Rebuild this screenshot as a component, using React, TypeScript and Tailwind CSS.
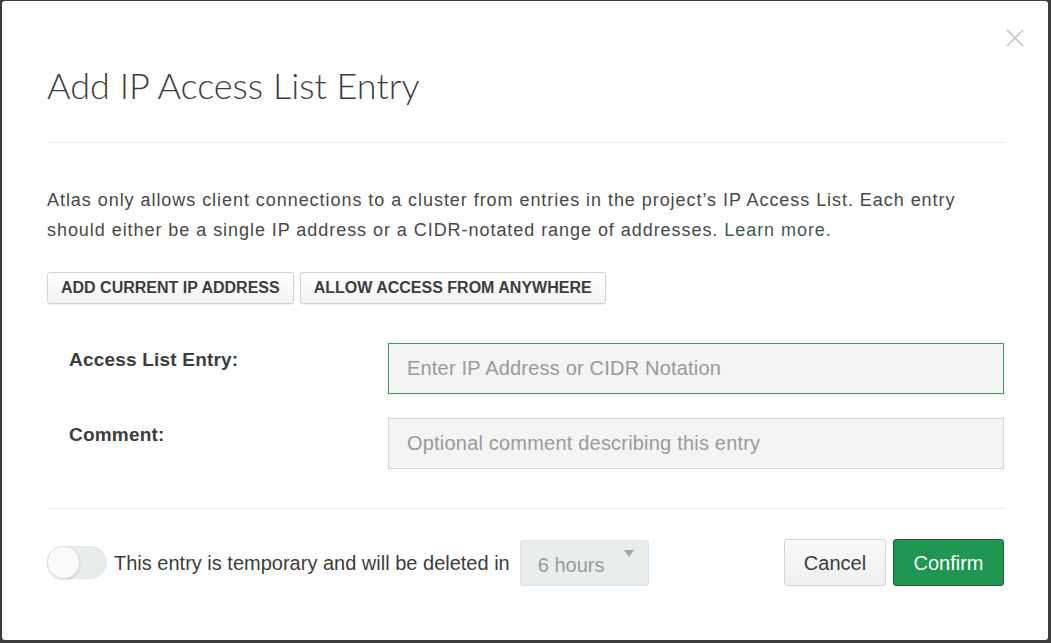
import React, { useState } from 'react';

const body = "font-['Liberation_Sans',Arial,sans-serif]";

export default function App() {
  const [temporary, setTemporary] = useState(false);

  return (
    <div className={`h-[643px] w-[1051px] bg-[#3b3b3b] pt-px pl-[2px] pr-[3px] pb-[3px] ${body}`}>
      <div className="relative h-full w-full rounded-[3px] bg-white pl-[45px] pr-[44px] text-[#494747]">
        {/* Close */}
        <button className="absolute right-[24px] top-[28px] text-[#c5c9c7]" aria-label="Close">
          <svg width="18" height="18" viewBox="0 0 18 18" fill="none" stroke="currentColor" strokeWidth="1.6">
            <path d="M1 1 L17 17 M17 1 L1 17" />
          </svg>
        </button>

        {/* Header */}
        <div className="border-b border-[#e7eeec] pt-[62px] pb-[35px]">
          <h1 className="font-['Lato',sans-serif] text-[36px] font-light leading-[44px] text-[#3d3d3d]">
            Add IP Access List Entry
          </h1>
        </div>

        {/* Description */}
        <p className="mt-[42px] text-[18px] leading-[30px] tracking-[0.95px]">
          Atlas only allows client connections to a cluster from entries in the project’s IP Access List. Each entry
          should either be a single IP address or a CIDR-notated range of addresses. <a className="text-[#3b5c4a]">Learn more.</a>
        </p>

        <div className="mt-[27px] flex gap-[6px]">
          <button className="h-[32px] rounded-[3px] border border-[#cfd3d1] bg-gradient-to-b from-white to-[#f1f2f1] px-[13px] text-[16px] font-bold uppercase text-[#3d3d3d] shadow-[0_1px_1px_rgba(0,0,0,0.06)]">
            Add current IP address
          </button>
          <button className="h-[32px] rounded-[3px] border border-[#cfd3d1] bg-gradient-to-b from-white to-[#f1f2f1] px-[13px] text-[16px] font-bold uppercase text-[#3d3d3d] shadow-[0_1px_1px_rgba(0,0,0,0.06)]">
            Allow access from anywhere
          </button>
        </div>

        {/* Form */}
        <div className="mt-[39px] flex flex-col gap-[24px] border-b border-[#e7eeec] pb-[39px]">
          <div className="flex items-start">
            <label className="w-[341px] pl-[22px] pt-[3px] text-[19px] font-bold tracking-[0.2px] text-[#3d3d3d]">Access List Entry:</label>
            <input
              autoFocus
              placeholder="Enter IP Address or CIDR Notation"
              className="h-[51px] flex-1 border border-[#3d9c5f] bg-[#f3f4f3] px-[18px] text-[20px] tracking-[0.2px] text-[#3d3d3d] shadow-[0_0_6px_rgba(0,0,0,0.08)] outline-none placeholder:text-[#9a9a9a]"
            />
          </div>
          <div className="flex items-start">
            <label className="w-[341px] pl-[22px] pt-[3px] text-[19px] font-bold tracking-[0.2px] text-[#3d3d3d]">Comment:</label>
            <input
              placeholder="Optional comment describing this entry"
              className="h-[51px] flex-1 border border-[#d5d8d6] bg-[#f3f4f3] px-[18px] text-[20px] tracking-[0.2px] text-[#3d3d3d] outline-none placeholder:text-[#9a9a9a]"
            />
          </div>
        </div>

        {/* Footer */}
        <div className="mt-[30px] flex items-center justify-between">
          <div className="flex items-center">
            <button
              onClick={() => setTemporary(!temporary)}
              className="relative h-[33px] w-[60px] rounded-full border border-[#e1e6e4] bg-[#e8edeb]"
              aria-label="Temporary"
            >
              <span className="absolute left-[-1px] top-[-1px] h-[33px] w-[33px] rounded-full border border-[#dfe3e1] bg-[#fbfbfb] shadow-[0_1px_2px_rgba(0,0,0,0.12)]" />
            </button>
            <span className="ml-[7px] text-[20px] text-[#3d3d3d]">This entry is temporary and will be deleted in</span>
            <div className="ml-[10px] flex h-[46px] w-[129px] items-center justify-between rounded-[3px] border border-[#dde2e0] bg-[#e9eeec] pl-[17px] pr-[14px]">
              <span className="pt-[4px] text-[20px] text-[#9a9a9a]">6 hours</span>
              <svg width="10" height="8" viewBox="0 0 10 8" className="mb-[18px] text-[#a6a6a6]">
                <path d="M0 0 H10 L5 7 Z" fill="currentColor" />
              </svg>
            </div>
          </div>
          <div className="flex gap-[7px]">
            <button className="h-[47px] w-[102px] rounded-[3px] border border-[#cfd3d1] bg-gradient-to-b from-[#fafafa] to-[#efefef] text-[20px] text-[#3d3d3d]">
              Cancel
            </button>
            <button className="h-[47px] w-[111px] rounded-[3px] border border-[#1c5e37] bg-[#1f9652] text-[20px] text-white">
              Confirm
            </button>
          </div>
        </div>
      </div>
    </div>
  );
}
